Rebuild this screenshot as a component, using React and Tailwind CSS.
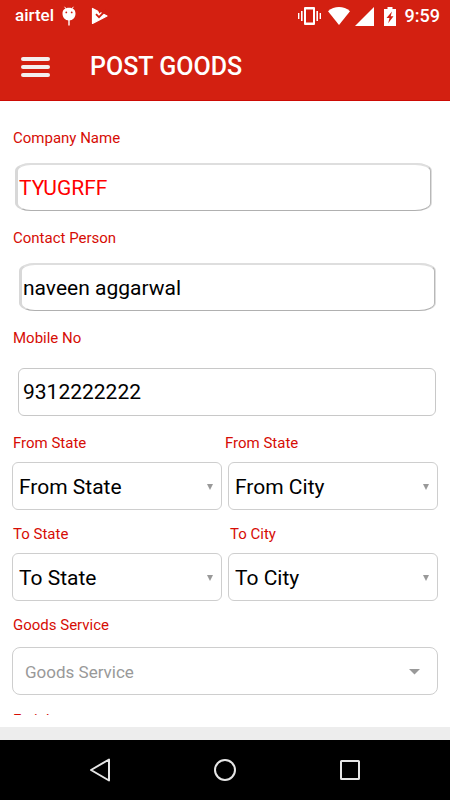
import React, { useState } from "react";

const labelStyle = "block text-[15px] leading-5 text-[#d60d05]";
const inputStyle = "block w-full h-12 bg-white text-[21px] outline-none";
const selectStyle =
  "block w-full h-12 pt-[3px] appearance-none border border-[#cecece] bg-white outline-none";
const bevelStyle =
  "rounded-[16px/8px] border-t-2 border-t-[#dedede] border-b border-b-[#b0b0b0] border-l-3 border-l-[#d8d8d8] border-r border-r-[#b8b8b8] shadow-[1px_0_0_#dedede] pl-px";

const AndroidIcon = () => (
  <svg width="14" height="20" viewBox="0 0 14 20" fill="white">
    <path d="M2.600 0.800 4.200 3M11.400 0.800 9.800 3" stroke="white" strokeWidth="1" />
    <path
      fillRule="evenodd"
      d="M7 1.800c4 0 6.500 2.200 6.500 5.600 0 3.800-2.700 7-6.500 7S.5 11.200.5 7.400C.5 4 3 1.800 7 1.800ZM4.300 5.500a.9.9 0 1 0 0 1.800.9.9 0 0 0 0-1.800Zm5.400 0a.9.9 0 1 0 0 1.800.9.9 0 0 0 0-1.800Z"
    />
    <path d="M6.300 14h1.400v5.500H6.300z" />
  </svg>
);

const PlayCheckIcon = () => (
  <svg width="17" height="18" viewBox="0 0 17 18">
    <path
      d="M1.500 1.500v15L16 9Z"
      fill="white"
      stroke="white"
      strokeWidth="1.200"
      strokeLinejoin="round"
    />
    <path d="M5 7.200 8 10.200 15 3" fill="none" stroke="#d32011" strokeWidth="1.800" />
    <path d="M7 3.500 8.500 6.500 12 3Z" fill="#d32011" />
  </svg>
);

const StatusBar = () => (
  <div className="flex items-center justify-between h-8 pl-[15px] pr-[10px] font-medium text-white">
    <div className="flex items-center">
      <span className="text-[17px]">airtel</span>
      <span className="ml-2">
        <AndroidIcon />
      </span>
      <span className="ml-[15px]">
        <PlayCheckIcon />
      </span>
    </div>
    <div className="flex items-center">
      {/* vibrate */}
      <svg width="23" height="18" viewBox="0 0 23 18" fill="white">
        <path fillRule="evenodd" d="M6 1q0-1 1-1h9q1 0 1 1v16q0 1-1 1H7q-1 0-1-1ZM8 2.500v13h7v-13Z" />
        <path d="M3 4h1.600v10H3zM0 6h1.400v6H0zM18.400 4H20v10h-1.600zM21.600 6H23v6h-1.400z" />
      </svg>
      {/* wifi */}
      <svg className="ml-[7px]" width="22" height="18" viewBox="0 0 22 18" fill="white">
        <path d="M0 4.200C6.300-1.300 15.700-1.300 22 4.200L11 18Z" />
      </svg>
      {/* signal */}
      <svg className="ml-[5px]" width="19" height="19" viewBox="0 0 19 19" fill="white">
        <path d="M19 0v19H0Z" />
      </svg>
      {/* battery */}
      <svg className="ml-[10px]" width="12" height="19" viewBox="0 0 12 19">
        <path d="M3.500 0h5v2H12v17H0V2h3.500Z" fill="white" />
        <path d="M8 4.500 2.500 11h3L4.200 16.200 9.500 9.200H6.700Z" fill="#d32011" />
      </svg>
      <span className="ml-[9px] text-lg">9:59</span>
    </div>
  </div>
);

const Header = () => (
  <header className="bg-[#d32011] border-b border-[#cc0b05]">
    <StatusBar />
    <div className="flex items-center h-[68px] pl-[21px] pt-[2px]">
      <button type="button" aria-label="Menu" className="flex flex-col gap-1 w-[29px]">
        <span className="h-1 w-full rounded-full bg-[#f4eeee]" />
        <span className="h-1 w-full rounded-full bg-[#f4eeee]" />
        <span className="h-1 w-full rounded-full bg-[#f4eeee]" />
      </button>
      <h1 className="ml-10 text-[25px] leading-8 font-medium text-white">POST GOODS</h1>
    </div>
  </header>
);

const StateSelect = ({ id, option }) => (
  <div className="relative">
    <select id={id} className={`${selectStyle} pl-[6px] rounded-md text-[21px] text-black`}>
      <option>{option}</option>
    </select>
    <svg
      className="absolute right-[9px] top-[22px] pointer-events-none"
      width="6"
      height="6"
      viewBox="0 0 6 6"
    >
      <path d="M0 0h6L3 6Z" fill="#999" />
    </svg>
  </div>
);

const NavBar = () => (
  <nav className="flex items-center justify-center gap-[101px] h-[60px] bg-black">
    <button type="button" aria-label="Back">
      <svg width="24" height="24" viewBox="0 0 24 24" fill="none" stroke="#e6e6e6" strokeWidth="2">
        <path d="M21 1.500v21L3 12Z" strokeLinejoin="round" />
      </svg>
    </button>
    <button type="button" aria-label="Home">
      <svg width="24" height="24" viewBox="0 0 24 24" fill="none" stroke="#e6e6e6" strokeWidth="2">
        <circle cx="12" cy="12" r="10" />
      </svg>
    </button>
    <button type="button" aria-label="Recent apps">
      <svg width="24" height="24" viewBox="0 0 24 24" fill="none" stroke="#e6e6e6" strokeWidth="2">
        <rect x="3" y="3" width="18" height="18" rx="0.500" />
      </svg>
    </button>
  </nav>
);

const App = () => {
  const [company, setCompany] = useState("TYUGRFF");
  const [person, setPerson] = useState("naveen aggarwal");
  const [mobile, setMobile] = useState("9312222222");

  return (
    <div className="flex flex-col h-screen bg-white font-['Roboto',sans-serif]">
      <Header />

      <main className="flex-1 min-h-0 pb-3">
        <form className="h-full overflow-hidden px-3 pt-[27px]">
          <label htmlFor="company" className={`${labelStyle} pl-px`}>
            Company Name
          </label>
          <div className="pt-[15px] pb-[17px] pl-[3px] pr-[7px]">
            <input
              id="company"
              value={company}
              onChange={(e) => setCompany(e.target.value)}
              className={`${inputStyle} ${bevelStyle} text-[#ff0000]`}
            />
          </div>

          <label htmlFor="person" className={`${labelStyle} pl-px`}>
            Contact Person
          </label>
          <div className="pt-[15px] pb-[17px] pl-[7px] pr-[3px]">
            <input
              id="person"
              value={person}
              onChange={(e) => setPerson(e.target.value)}
              className={`${inputStyle} ${bevelStyle} text-black`}
            />
          </div>

          <label htmlFor="mobile" className={`${labelStyle} pl-px`}>
            Mobile No
          </label>
          <div className="pt-5 pb-[17px] pl-[6px] pr-[2px]">
            <input
              id="mobile"
              type="tel"
              value={mobile}
              onChange={(e) => setMobile(e.target.value)}
              className={`${inputStyle} rounded-md border border-[#c8c8c8] pl-1 text-black`}
            />
          </div>

          <div className="grid grid-cols-2 gap-x-[6px] gap-y-[9px]">
            <label htmlFor="fromState" className={`${labelStyle} pl-px`}>
              From State
            </label>
            <label htmlFor="fromCity" className={`${labelStyle} -ml-[3px]`}>
              From State
            </label>
            <StateSelect id="fromState" option="From State" />
            <StateSelect id="fromCity" option="From City" />
          </div>

          <div className="grid grid-cols-2 gap-x-[6px] gap-y-[9px] pt-[14px]">
            <label htmlFor="toState" className={`${labelStyle} pl-px`}>
              To State
            </label>
            <label htmlFor="toCity" className={`${labelStyle} pl-[2px]`}>
              To City
            </label>
            <StateSelect id="toState" option="To State" />
            <StateSelect id="toCity" option="To City" />
          </div>

          <label htmlFor="goods" className={`${labelStyle} mt-[14px] pl-px`}>
            Goods Service
          </label>
          <div className="relative mt-3">
            <select id="goods" className={`${selectStyle} pl-3 rounded-lg text-[17px] text-[#999]`}>
              <option>Goods Service</option>
            </select>
            <svg
              className="absolute right-[18px] top-[22px] pointer-events-none"
              width="11"
              height="6"
              viewBox="0 0 11 6"
            >
              <path d="M0 0h11L5.500 5.500Z" fill="#999" />
            </svg>
          </div>

          <p className={`${labelStyle} mt-[15px] pl-px`}>Freight</p>
        </form>
      </main>

      <div className="h-[13px] bg-[#ededed]" />
      <NavBar />
    </div>
  );
};

export default App;
